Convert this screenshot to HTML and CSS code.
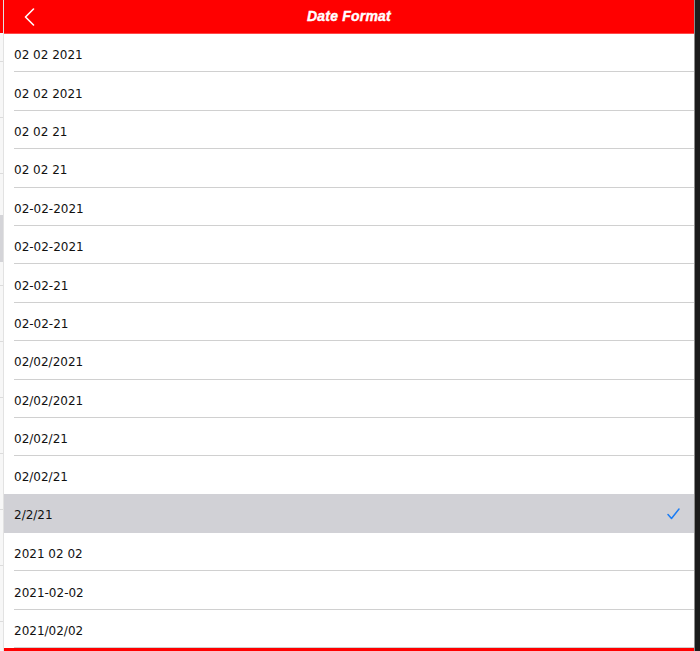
FILE: index.html
```html
<!DOCTYPE html>
<html lang="en">
<head>
  <meta charset="UTF-8">
  <title>Date Format</title>
  <meta name="viewport" content="width=device-width, initial-scale=1.0">
  <link rel="stylesheet" href="styles.css">
</head>
<body>

  <div class="under">
    <div class="under-bar"></div>
    <div class="under-body">
      <div class="under-block"></div>
    </div>
  </div>

  <div class="panel">
    <div class="header">
      <button class="back" type="button" aria-label="Back">
        <svg width="11" height="18" viewBox="0 0 11 18">
          <path d="M9.5 1 L1.5 9 L9.5 17" fill="none" stroke="#fff" stroke-width="1.6" stroke-linecap="round" stroke-linejoin="round"/>
        </svg>
      </button>
      <h1 class="title">Date Format</h1>
      <span></span>
    </div>

    <ul class="list">
      <li class="row"><span class="row-inner">02 02 2021</span></li>
      <li class="row"><span class="row-inner">02 02 2021</span></li>
      <li class="row"><span class="row-inner">02 02 21</span></li>
      <li class="row"><span class="row-inner">02 02 21</span></li>
      <li class="row"><span class="row-inner">02-02-2021</span></li>
      <li class="row"><span class="row-inner">02-02-2021</span></li>
      <li class="row"><span class="row-inner">02-02-21</span></li>
      <li class="row"><span class="row-inner">02-02-21</span></li>
      <li class="row"><span class="row-inner">02/02/2021</span></li>
      <li class="row"><span class="row-inner">02/02/2021</span></li>
      <li class="row"><span class="row-inner">02/02/21</span></li>
      <li class="row"><span class="row-inner">02/02/21</span></li>
      <li class="row selected">
        <span class="row-inner">2/2/21
          <svg class="check" width="13" height="12" viewBox="0 0 13 12">
            <path d="M1 6.5 L4.5 10.5 L12 1" fill="none" stroke="#1a7cf5" stroke-width="1.5" stroke-linecap="round" stroke-linejoin="round"/>
          </svg>
        </span>
      </li>
      <li class="row"><span class="row-inner">2021 02 02</span></li>
      <li class="row"><span class="row-inner">2021-02-02</span></li>
      <li class="row"><span class="row-inner">2021/02/02</span></li>
    </ul>

    <div class="footer-bar"></div>
  </div>

  <div class="edge"></div>

</body>
</html>
```

FILE: styles.css
```css
html, body {
  height: 100%;
}

body {
  margin: 0;
  display: flex;
  height: 651px;
  overflow: hidden;
  background-color: #1c1c1c;
  font-family: "DejaVu Sans", sans-serif;
}

/* page peeking out behind the popover */
.under {
  width: 3px;
  display: flex;
  flex-direction: column;
}

.under-bar {
  height: 33px;
  background-color: #ff0000;
}

.under-body {
  flex: 1;
  background-color: #f7f7f7;
  background-image: repeating-linear-gradient(to bottom, transparent 0, transparent 28px, #dcdcdc 28px, #dcdcdc 29px, transparent 29px, transparent 56px);
}

.under-block {
  height: 47px;
  margin-top: 182px;
  background-color: #d4d4d8;
}

.panel {
  flex: 1;
  display: flex;
  flex-direction: column;
  background-color: #fff;
  border-left: 1px solid #e2e2e2;
  border-right: 1px solid #8c8c8c;
}

.header {
  height: 33px;
  background-color: #ff0000;
  border-bottom: 1px solid #ff4a4a;
  display: grid;
  grid-template-columns: 1fr auto 1fr;
  align-items: center;
}

.back {
  justify-self: start;
  background: none;
  border: none;
  padding: 0 0 0 20px;
  height: 33px;
  display: flex;
  align-items: center;
  cursor: pointer;
}

.title {
  margin: 0 0 1px 0;
  font-family: "Liberation Sans", Arial, sans-serif;
  font-size: 14px;
  font-weight: bold;
  font-style: italic;
  color: #fff;
  -webkit-text-stroke: 0.4px #fff;
  letter-spacing: 0.2px;
}

.list {
  list-style: none;
  margin: 0;
  padding: 0;
}

.row {
  height: 38.4px;
  padding-left: 10px;
  box-sizing: border-box;
}

.row-inner {
  height: 100%;
  box-sizing: border-box;
  display: flex;
  align-items: center;
  justify-content: space-between;
  padding: 5px 14px 0 0;
  border-bottom: 1px solid #d0d0d0;
  font-size: 12px;
  color: #111;
}

.row.selected {
  background-color: #d1d1d6;
  margin-top: -1px;
  height: 39.4px;
}

.row.selected .row-inner {
  border-bottom-color: #d1d1d6;
}

.check {
  display: block;
  margin-top: -3px;
}

.footer-bar {
  flex: 1;
  background-color: #ff0000;
}

.edge {
  width: 5px;
  background-color: #1c1c1c;
}
```
